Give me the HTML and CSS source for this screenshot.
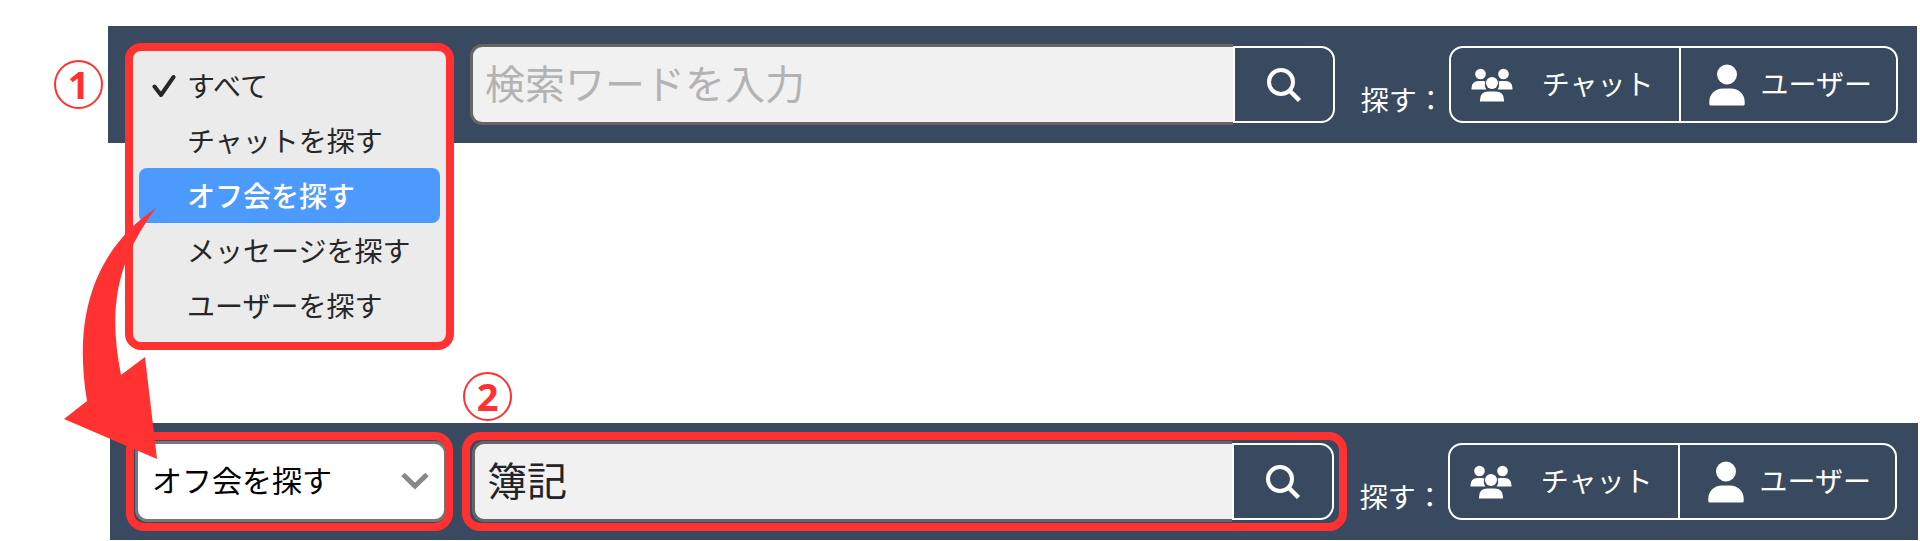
FILE: index.html
```html
<!DOCTYPE html>
<html lang="ja">
<head>
	<meta charset="utf-8">
	<title>検索の使い方</title>
	<link rel="stylesheet" href="styles.css">
</head>
<body>
	<!-- shared icons -->
	<svg class="defs" width="0" height="0">
		<symbol id="search" viewBox="0 0 36 36">
			<circle cx="15" cy="15" r="12" fill="none" stroke="currentColor" stroke-width="4"/>
			<path d="M23.500 23.500L33.500 33.500" stroke="currentColor" stroke-width="4.500"/>
		</symbol>
		<symbol id="people" viewBox="0 0 42 34">
			<circle cx="9.500" cy="6" r="5.300"/>
			<circle cx="32.500" cy="6" r="5.300"/>
			<path d="M.5 21.500v-1q0-7.500 7-7.500h4.500q1.600 0 2.400 .5q-1.400 4.500 1 8zM41.500 21.500v-1q0-7.500-7-7.500h-4.500q-1.600 0-2.400 .5q1.400 4.500-1 8z"/>
			<circle cx="21" cy="15" r="6"/>
			<path d="M9 33.500v-1.500q0-8.500 8.500-8.500h7q8.500 0 8.500 8.500v1.500z"/>
		</symbol>
		<symbol id="user" viewBox="0 0 36 42">
			<circle cx="18" cy="10.500" r="10"/>
			<path d="M.3 40v-2c0-8 6-13.500 13.700-13.500h8c7.700 0 13.700 5.500 13.700 13.500v2q0 1.500-1.500 1.500h-32.400q-1.500 0-1.500-1.500z"/>
		</symbol>
	</svg>

	<main>
		<section class="bar">
			<div class="target">
				<ul class="menu" role="listbox" aria-label="検索対象">
					<li role="option" aria-selected="true">
						<svg class="tick" viewBox="0 0 24 24"><path d="M2.500 12.500L9 21L21.500 3" fill="none" stroke="currentColor" stroke-width="4" stroke-linecap="round" stroke-linejoin="round"/></svg>
						すべて
					</li>
					<li role="option">チャットを探す</li>
					<li role="option" class="active">オフ会を探す</li>
					<li role="option">メッセージを探す</li>
					<li role="option">ユーザーを探す</li>
				</ul>
			</div>
			<form class="search">
				<input type="text" placeholder="検索ワードを入力" aria-label="検索ワード">
				<button type="button" aria-label="検索"><svg><use href="#search"/></svg></button>
			</form>
			<span class="caption">探す：</span>
			<div class="links">
				<button type="button" class="chat"><svg><use href="#people"/></svg><span>チャット</span></button>
				<button type="button" class="user"><svg><use href="#user"/></svg><span>ユーザー</span></button>
			</div>
			<span class="number">1</span>
		</section>

		<section class="bar second">
			<div class="target framed">
				<select aria-label="検索対象">
					<option>すべて</option>
					<option>チャットを探す</option>
					<option selected>オフ会を探す</option>
					<option>メッセージを探す</option>
					<option>ユーザーを探す</option>
				</select>
				<svg class="chevron" viewBox="0 0 28 18"><path d="M2 2.500L14 14L26 2.500" fill="none" stroke="currentColor" stroke-width="5"/></svg>
			</div>
			<form class="search framed">
				<input type="text" value="簿記" aria-label="検索ワード">
				<button type="button" aria-label="検索"><svg><use href="#search"/></svg></button>
			</form>
			<span class="caption">探す：</span>
			<div class="links">
				<button type="button" class="chat"><svg><use href="#people"/></svg><span>チャット</span></button>
				<button type="button" class="user"><svg><use href="#user"/></svg><span>ユーザー</span></button>
			</div>
			<span class="number">2</span>
		</section>

		<!-- from the menu item down to the closed select -->
		<svg class="arrow" viewBox="0 0 94 252"><path d="M92 0C34 39 8 103 23 193L0 211L93 251L81 149L57 167C44 101 52 54 92 0Z"/></svg>
	</main>
</body>
</html>
```

FILE: styles.css
```css
* { box-sizing: border-box; }
body { margin: 0; background-color: #fff; font: 28px/40px "Noto Sans CJK JP", sans-serif; }
.defs { position: absolute; }
main { position: relative; padding-top: 26px; }
button, input, select { margin: 0; font: inherit; }
svg { fill: currentColor; }

.bar { position: relative; display: flex; align-items: center; margin: 0 3px 0 108px; padding: 18px 19px 18px 25px; background-color: #394960; color: #fff; }
.second { margin: 280px 2px 0 110px; padding-right: 21px; }

.target { position: relative; flex: none; width: 312px; height: 81px; margin-right: 25px; }
.target select { width: 100%; height: 100%; padding: 0 14px 5px; border: 3px solid #777; border-radius: 12px; background-color: #fff; color: #000; font-size: 30px; appearance: none; }
.chevron { position: absolute; top: 31px; right: 18px; width: 28px; height: 18px; color: #888; }

.menu { position: absolute; z-index: 1; top: -1px; left: -8px; right: -9px; margin: 0; padding: 7px 6px 9px; border: 8px solid #ff3131; border-radius: 16px; background-color: #ebebeb; color: #262626; list-style: none; }
.menu li { position: relative; height: 55px; padding-left: 48px; border-radius: 8px; line-height: 55px; }
.menu .active { background-color: #4d9aff; color: #fff; font-weight: 500; }
.tick { position: absolute; top: 16px; left: 13px; width: 24px; height: 24px; }

.search { position: relative; display: flex; flex: 1; height: 81px; min-width: 0; }
.search input { flex: 1; min-width: 0; padding: 0 12px 6px; border: 3px solid #666; border-right: 0; border-radius: 12px 0 0 12px; background-color: #f1f1f1; color: #212529; font-size: 40px; }
.search input::placeholder { color: #b3b3b3; opacity: 1; }
.search button { display: flex; align-items: center; justify-content: center; width: 102px; margin: 2px 0; padding: 0; border: 2px solid #fff; border-radius: 0 14px 14px 0; background-color: #394960; color: #fff; }
.search button svg { width: 36px; height: 36px; }

.framed::after { content: ""; position: absolute; inset: -9px -6px -9px -9px; border: 8px solid #ff3131; border-radius: 18px; pointer-events: none; }
.search.framed::after { right: -13px; left: -10px; }

.caption { align-self: flex-end; margin: 0 4px 6px 26px; }
.links { display: flex; height: 77px; border: 2px solid #fff; border-radius: 14px; }
.links button { display: flex; align-items: center; padding: 0 25px 0 20px; border: 0; background: none; color: #fff; }
.links .user { padding: 0 24px 0 28px; border-left: 2px solid #fff; }
.links span { padding-bottom: 4px; }
.chat svg { width: 42px; height: 34px; margin-right: 29px; }
.user svg { width: 36px; height: 42px; margin-right: 16px; }

.number { position: absolute; top: 34px; left: -54px; width: 49px; height: 49px; border: 2px solid #ff3131; border-radius: 50%; color: #ff3131; font: 700 38px/45px "Open Sans", sans-serif; text-align: center; }
.second .number { top: -51px; left: 353px; }
.arrow { position: absolute; z-index: 2; top: 208px; left: 64px; width: 94px; height: 252px; color: #ff3131; }
```
